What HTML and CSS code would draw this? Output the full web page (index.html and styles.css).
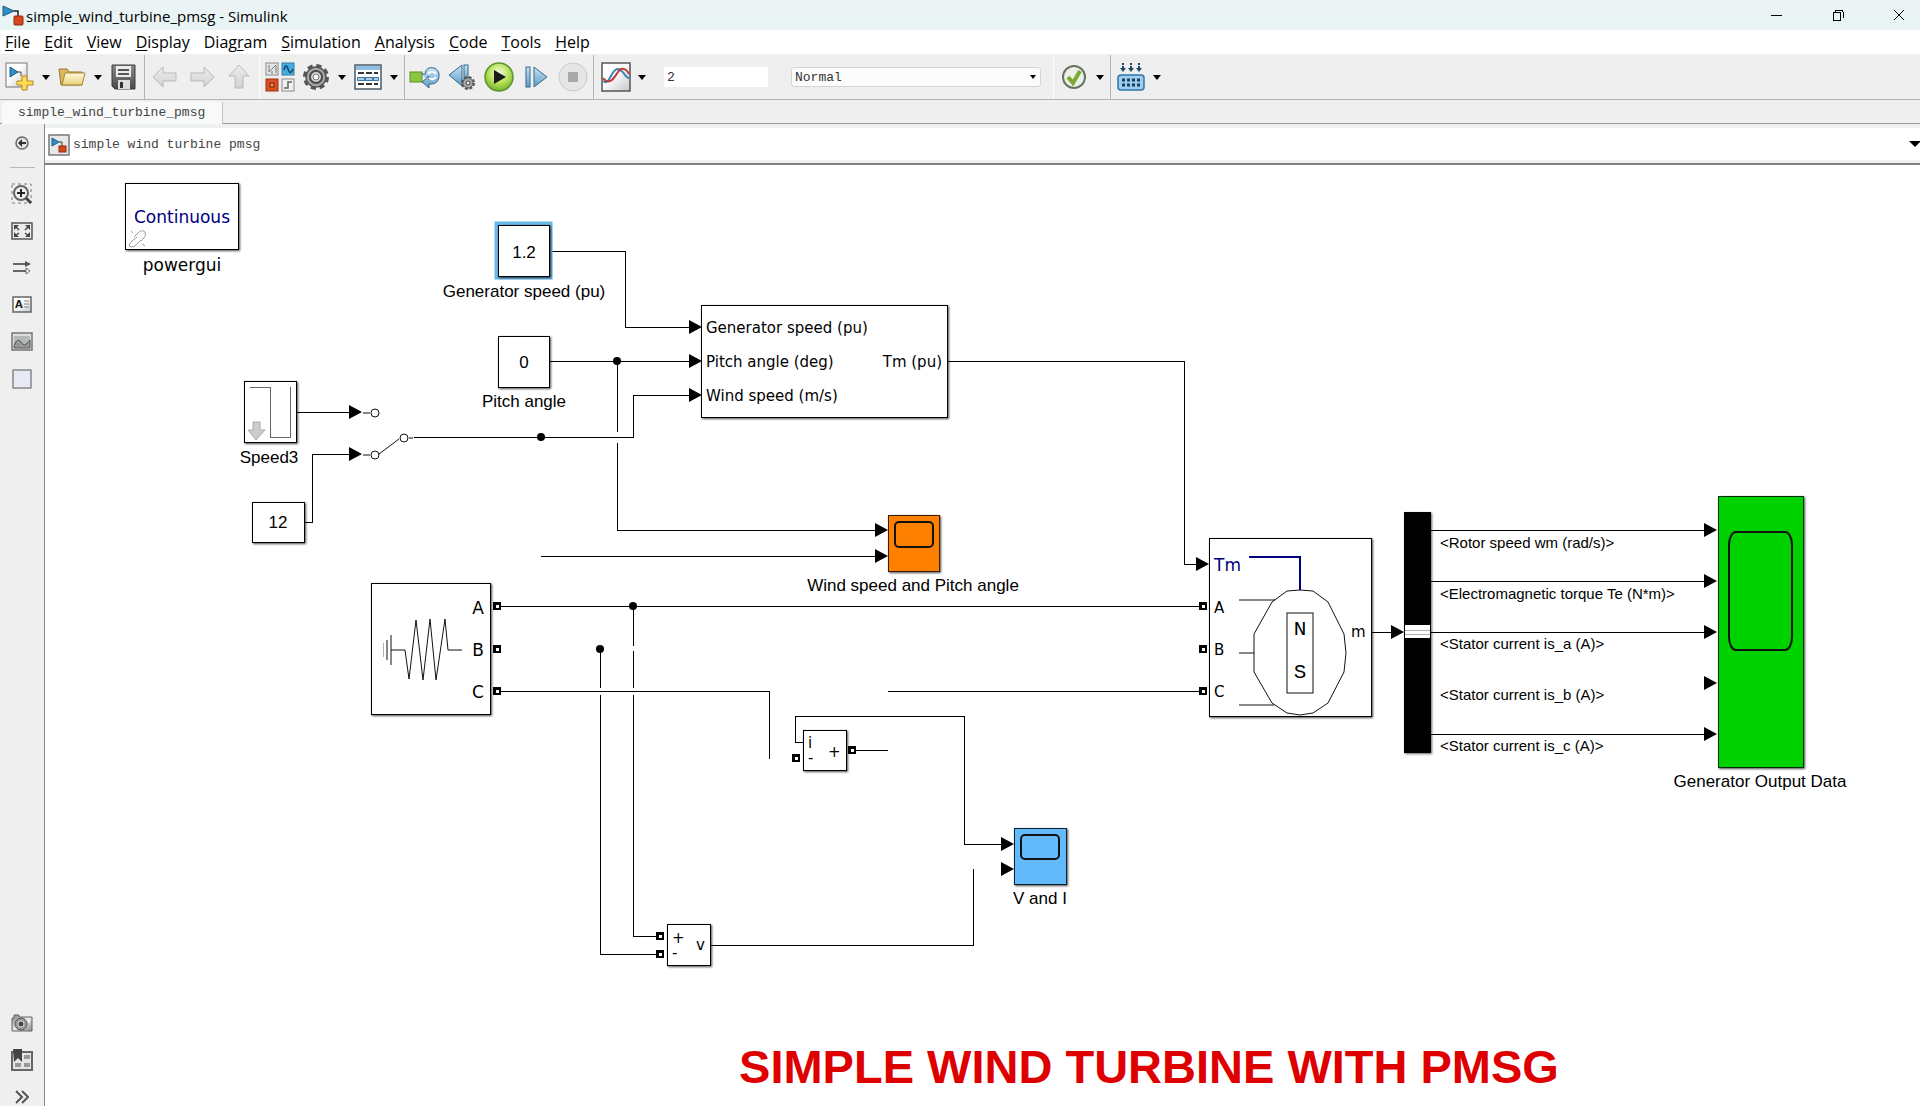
FILE: index.html
```html
<!DOCTYPE html>
<html lang="en">
<head>
<meta charset="utf-8">
<title>simple_wind_turbine_pmsg - Simulink</title>
<link rel="stylesheet" href="styles.css">
</head>
<body>
<svg class="defs" aria-hidden="true">
  <defs>
    <linearGradient id="paper" x1="0" y1="0" x2="1" y2="1"><stop offset="0.4" stop-color="#fff"/><stop offset="1" stop-color="#c4c8cc"/></linearGradient>
    <linearGradient id="folder" x1="0" y1="0" x2="0" y2="1"><stop offset="0" stop-color="#fffbe0"/><stop offset="1" stop-color="#e8cf77"/></linearGradient>
    <linearGradient id="pale" x1="0" y1="0" x2="0" y2="1"><stop offset="0" stop-color="#ededed"/><stop offset="1" stop-color="#d2d2d2"/></linearGradient>
    <linearGradient id="steel" x1="0" y1="0" x2="0" y2="1"><stop offset="0" stop-color="#c9e3f3"/><stop offset="1" stop-color="#5f9cc6"/></linearGradient>
    <linearGradient id="metal" x1="0" y1="0" x2="0" y2="1"><stop offset="0" stop-color="#8b8b8b"/><stop offset="1" stop-color="#4a4a4a"/></linearGradient>
    <linearGradient id="panel" x1="0" y1="0" x2="1" y2="1"><stop offset="0" stop-color="#777"/><stop offset="0.5" stop-color="#e8eaea"/><stop offset="1" stop-color="#888"/></linearGradient>
    <radialGradient id="go" cx="0.5" cy="0.35" r="0.65"><stop offset="0" stop-color="#f2fbdc"/><stop offset="0.55" stop-color="#b9e25c"/><stop offset="1" stop-color="#71b32a"/></radialGradient>
    <g id="model">
      <path d="M1 1L12 6L1 11Z" fill="#2f8fc4" stroke="#1d5f87"/>
      <path d="M12 6H16V11" fill="none" stroke="#222" stroke-width="1.5"/>
      <rect x="12" y="11" width="9" height="9" rx="1" fill="#d4481c" stroke="#8e2a0c"/>
    </g>
    <path id="caret" d="M0 0H8L4 5Z"/>
    <path id="arrow" d="M0 0L-13 -7V7Z"/>
    <g id="port"><rect x="-4" y="-4" width="8" height="8"/><rect x="-1" y="-1" width="3" height="3" fill="#fff"/></g>
  </defs>
</svg>

<header class="titlebar">
  <svg class="app-icon" width="22" height="22"><use href="#model" y="1"/></svg>
  <h1 class="title">simple_wind_turbine_pmsg - Simulink</h1>
  <div class="window-buttons">
    <button type="button" aria-label="Minimize"><svg width="12" height="12"><path d="M0 6H11" class="glyph"/></svg></button>
    <button type="button" aria-label="Restore"><svg width="12" height="12"><path d="M1 3H8V11H1ZM3 3V1H9Q11 1 11 3V9" class="glyph"/></svg></button>
    <button type="button" aria-label="Close"><svg width="12" height="12"><path d="M1 1L11 11M11 1L1 11" class="glyph smooth"/></svg></button>
  </div>
</header>

<nav class="menubar">
  <a href="#file"><u>F</u>ile</a><a href="#edit"><u>E</u>dit</a><a href="#view"><u>V</u>iew</a><a href="#display"><u>D</u>isplay</a><a href="#diagram">Diag<u>r</u>am</a><a href="#simulation"><u>S</u>imulation</a><a href="#analysis"><u>A</u>nalysis</a><a href="#code"><u>C</u>ode</a><a href="#tools"><u>T</u>ools</a><a href="#help"><u>H</u>elp</a>
</nav>

<div class="toolbar" role="toolbar" aria-label="Model toolbar">
  <div class="group">
    <button type="button" class="tool" aria-label="New model"><svg width="30" height="30"><rect x="1" y="1" width="21" height="24" fill="url(#paper)" stroke="#777"/><path d="M5 5L13 10L5 15Z" fill="#2f8fc4" stroke="#1d5f87"/><path d="M12 10H16V14" fill="none" stroke="#444"/><path d="M17 14H22V19H28V23H22V28H17V23H12V19H17Z" fill="#ffdf4d" stroke="#b8862a"/></svg></button>
    <button type="button" class="drop" aria-label="New options"><svg width="8" height="5"><use href="#caret"/></svg></button>
    <button type="button" class="tool" aria-label="Open"><svg width="28" height="20"><path d="M1 2H9L11 5H24V18H3Z" fill="#d9ba5c" stroke="#94762b"/><path d="M7 6H27L24 18H4Z" fill="url(#folder)" stroke="#a58738"/></svg></button>
    <button type="button" class="drop" aria-label="Open options"><svg width="8" height="5"><use href="#caret"/></svg></button>
    <button type="button" class="tool" aria-label="Save"><svg width="26" height="27"><path d="M1 1H24V25H4L1 22Z" fill="url(#metal)" stroke="#3a3a3a"/><rect x="5" y="2" width="15" height="11" fill="#ececec"/><path d="M7 6H18M7 10H18" stroke="#555" stroke-width="2"/><rect x="7" y="16" width="12" height="9" fill="#ddd"/><rect x="9" y="18" width="3" height="6" fill="#333"/></svg></button>
  </div>
  <div class="group spaced light">
    <button type="button" class="tool" aria-label="Back"><svg width="26" height="22"><path d="M1 11L11 1V7H24V15H11V21Z" fill="url(#pale)" stroke="#b9b9b9"/></svg></button>
    <button type="button" class="tool" aria-label="Forward"><svg width="26" height="22"><path d="M25 11L15 1V7H2V15H15V21Z" fill="url(#pale)" stroke="#b9b9b9"/></svg></button>
    <button type="button" class="tool" aria-label="Up to parent"><svg width="22" height="26"><path d="M11 1L21 12H15V24H7V12H1Z" fill="url(#pale)" stroke="#b9b9b9"/></svg></button>
  </div>
  <div class="group">
    <button type="button" class="tool" aria-label="Library browser"><svg width="30" height="30"><rect x="1" y="1" width="12" height="12" fill="#e6e6e6" stroke="#8a8a8a"/><path d="M4 3V10M4 10L11 3M7 9V12M11 4V11" fill="none" stroke="#777"/><rect x="17" y="1" width="12" height="12" fill="#48aee2" stroke="#2c7daa"/><path d="M19 8Q21 0 23 7T28 7" fill="none" stroke="#0d4567" stroke-width="1.5"/><rect x="1" y="17" width="12" height="12" fill="#d8501f" stroke="#9c3410"/><rect x="5" y="21" width="4" height="4" fill="#e98b66" stroke="#7a260b"/><rect x="17" y="17" width="12" height="12" fill="#f1f1f1" stroke="#8a8a8a"/><path d="M19 26H23V20H27" fill="none" stroke="#666" stroke-width="1.5"/></svg></button>
    <button type="button" class="tool" aria-label="Model configuration"><svg width="28" height="28"><circle cx="14" cy="14" r="11" fill="none" stroke="#555" stroke-width="4" stroke-dasharray="5 3.64"/><circle cx="14" cy="14" r="10" fill="#a5a5a5" stroke="#555" stroke-width="1.5"/><circle cx="14" cy="14" r="6" fill="#d8d8d8" stroke="#4a4a4a" stroke-width="2"/><circle cx="14" cy="14" r="3" fill="#f5f5f5" stroke="#777"/></svg></button>
    <button type="button" class="drop" aria-label="Configuration options"><svg width="8" height="5"><use href="#caret"/></svg></button>
    <button type="button" class="tool" aria-label="Model explorer"><svg width="28" height="26"><rect x="1" y="1" width="26" height="24" fill="#fff" stroke="#4d5a66" stroke-width="1.5"/><rect x="2" y="2" width="24" height="4" fill="#8fbfe0"/><rect x="3" y="13" width="22" height="4" fill="#3a78ad"/><path d="M4 9H10M12 9H18M20 9H24M4 20H10M12 20H18M20 20H24" stroke="#333" stroke-width="2"/><path d="M4 15H10M12 15H18M20 15H24" stroke="#d7ebf8" stroke-width="1.5"/></svg></button>
    <button type="button" class="drop" aria-label="Explorer options"><svg width="8" height="5"><use href="#caret"/></svg></button>
  </div>
  <div class="group spaced">
    <button type="button" class="tool" aria-label="Update diagram"><svg width="32" height="24"><rect x="1" y="7" width="12" height="10" fill="#8cc63f" stroke="#5b8f22"/><path d="M12 9H16Q17 1 25 3Q31 5 30 12Q29 19 22 19H20V23L13 17L20 11V15" fill="url(#steel)" stroke="#33698f"/><path d="M19 9Q23 4 27 9M27 12Q24 16 20 13" fill="none" stroke="#fff" stroke-width="2"/></svg></button>
    <button type="button" class="tool" aria-label="Step back"><svg width="28" height="28"><path d="M1 12L14 2V23Z" fill="url(#steel)" stroke="#33698f"/><rect x="16" y="2" width="4" height="18" fill="url(#steel)" stroke="#33698f"/><circle cx="20" cy="20" r="6" fill="none" stroke="#555" stroke-width="2" stroke-dasharray="3 1.7"/><circle cx="20" cy="20" r="5" fill="#aaa" stroke="#555"/><circle cx="20" cy="20" r="2" fill="#eee" stroke="#444"/></svg></button>
    <button type="button" class="tool" aria-label="Run"><svg width="32" height="32"><circle cx="16" cy="16" r="14" fill="url(#go)" stroke="#5f9430" stroke-width="1.5"/><path d="M11 9L23 16L11 23Z" fill="#1b1b1b"/></svg></button>
    <button type="button" class="tool" aria-label="Step forward"><svg width="24" height="24"><rect x="2" y="2" width="4" height="20" fill="url(#steel)" stroke="#33698f"/><path d="M10 2L23 12L10 22Z" fill="url(#steel)" stroke="#33698f"/></svg></button>
    <button type="button" class="tool" aria-label="Stop"><svg width="32" height="32"><circle cx="16" cy="16" r="14" fill="#e6e6e6" stroke="#c9c9c9"/><rect x="11" y="11" width="10" height="10" fill="#a9a9a9"/></svg></button>
  </div>
  <div class="group fields light">
    <button type="button" class="tool" aria-label="Simulation data"><svg width="30" height="30"><rect x="1" y="1" width="28" height="28" fill="url(#paper)" stroke="#555" stroke-width="1.5"/><path d="M2 19C9 25 10 6 17 7C23 8 24 16 28 16" fill="none" stroke="#3a86c0" stroke-width="2"/><path d="M2 16C9 25 14 14 17 10C20 5 25 6 28 12" fill="none" stroke="#c23b31" stroke-width="2"/></svg></button>
    <button type="button" class="drop" aria-label="Data options"><svg width="8" height="5"><use href="#caret"/></svg></button>
    <input class="stop-time" type="text" value="2" aria-label="Simulation stop time">
    <div class="mode">
      <select aria-label="Simulation mode"><option>Normal</option></select>
      <svg class="mode-caret" width="6" height="4"><path d="M0 0H6L3 4Z"/></svg>
    </div>
  </div>
  <div class="group">
    <button type="button" class="tool" aria-label="Model advisor"><svg width="28" height="28"><circle cx="14" cy="14" r="11" fill="#eef0ec" stroke="#68745e" stroke-width="2"/><path d="M8 14L13 20L20 8" fill="none" stroke="#7cab33" stroke-width="4"/></svg></button>
    <button type="button" class="drop" aria-label="Advisor options"><svg width="8" height="5"><use href="#caret"/></svg></button>
  </div>
  <div class="group last">
    <button type="button" class="tool" aria-label="Build"><svg width="28" height="28"><path d="M6 0V7M14 0V7M22 0V7" stroke="#1e4664" stroke-width="2" stroke-dasharray="2 1"/><path d="M3 5H9L6 9ZM11 5H17L14 9ZM19 5H25L22 9Z" fill="#1e4664"/><rect x="1" y="12" width="26" height="15" rx="3" fill="#9fcdef" stroke="#2d75aa" stroke-width="1.5"/><path d="M5 17H23M5 22H23" stroke="#17415f" stroke-width="3" stroke-dasharray="3 2"/></svg></button>
    <button type="button" class="drop" aria-label="Build options"><svg width="8" height="5"><use href="#caret"/></svg></button>
  </div>
</div>

<div class="tabs"><a class="tab" href="#model-tab">simple_wind_turbine_pmsg</a></div>

<div class="workspace">
  <aside class="palette">
    <div class="palette-set">
      <button type="button" aria-label="Hide browser"><svg width="16" height="16"><circle cx="8" cy="8" r="6" fill="#e4e4e4" stroke="#6a6a6a" stroke-width="1.5"/><path d="M4 8L8 4V7H12V9H8V12Z" fill="#333"/></svg></button>
      <hr>
      <button type="button" aria-label="Zoom"><svg width="22" height="22"><rect x="1" y="1" width="19" height="19" fill="none" stroke="#777" stroke-dasharray="3 3"/><circle cx="10" cy="10" r="7" fill="#eee" stroke="#666" stroke-width="2"/><path d="M6 10H14M10 6V14" stroke="#222" stroke-width="2"/><path d="M15 15L20 20" stroke="#444" stroke-width="3"/></svg></button>
      <button type="button" aria-label="Fit to view"><svg width="22" height="18"><rect x="1" y="1" width="20" height="16" fill="#e9eceb" stroke="#555" stroke-width="1.5"/><path d="M3 3H8L3 8ZM19 3H14L19 8ZM3 15H8L3 10ZM19 15H14L19 10Z" fill="#444"/><path d="M4 4L8 8M18 4L14 8M4 14L8 11M18 14L14 11" stroke="#444" stroke-width="1.5"/></svg></button>
      <button type="button" aria-label="Sample times"><svg width="20" height="16"><path d="M1 4H15M1 11H15" stroke="#666" stroke-width="2"/><path d="M13 1L19 4L13 7Z" fill="#555"/><path d="M14 8L18 11L14 14Z" fill="#fff" stroke="#666"/></svg></button>
      <button type="button" aria-label="Annotation"><svg width="20" height="18"><rect x="1" y="1" width="18" height="15" fill="url(#paper)" stroke="#666" stroke-width="1.5"/><path d="M12 5H17M12 8H17M12 11H17" stroke="#888"/><text x="3" y="12" class="a-icon">A</text></svg></button>
      <button type="button" aria-label="Image"><svg width="22" height="20"><rect x="1" y="1" width="20" height="17" fill="#ddd" stroke="#777" stroke-width="1.5"/><rect x="3" y="4" width="16" height="12" fill="#b4b8b8"/><path d="M3 14Q6 5 10 10T15 12Q17 11 19 8V16H3Z" fill="#999" stroke="#555"/></svg></button>
      <button type="button" aria-label="Area"><svg width="20" height="20"><rect x="1" y="1" width="18" height="18" fill="#e7eaf4" stroke="#888" stroke-width="1.5"/></svg></button>
    </div>
    <div class="palette-set">
      <button type="button" aria-label="Screenshot"><svg width="22" height="18"><path d="M1 4H3V1H8V3H21V17H1Z" fill="url(#panel)" stroke="#666"/><circle cx="10" cy="10" r="6" fill="#999" stroke="#555"/><circle cx="10" cy="10" r="3" fill="#444" stroke="#ddd"/><rect x="17" y="5" width="2" height="4" fill="#eee"/></svg></button>
      <button type="button" aria-label="Viewmarks"><svg width="22" height="22"><rect x="1" y="3" width="20" height="18" fill="#e6e6e6" stroke="#666" stroke-width="2"/><path d="M13 6H19V10H13ZM13 14H19V18H13ZM4 14H10V18H4Z" fill="#999"/><path d="M2 0H11V13L7 9L3 13Z" fill="#444"/></svg></button>
      <button type="button" aria-label="Expand palette"><svg width="14" height="14"><path d="M1 1L7 7L1 13M7 1L13 7L7 13" fill="none" stroke="#555" stroke-width="2"/></svg></button>
    </div>
  </aside>

  <main class="editor">
    <div class="explorer-bar">
      <a class="crumb" href="#root"><svg width="22" height="22"><rect x="1" y="1" width="20" height="20" fill="#e8e8e8" stroke="#777" stroke-width="1.5"/><path d="M4 4L11 8L4 12Z" fill="#2f8fc4" stroke="#1d5f87"/><path d="M11 8H14V12" fill="none" stroke="#333"/><rect x="11" y="12" width="7" height="6" fill="#d4481c" stroke="#8e2a0c"/></svg>simple wind turbine pmsg</a>
      <button type="button" class="crumb-drop" aria-label="History"><svg width="12" height="7"><path d="M0 0H12L6 6Z"/></svg></button>
    </div>

    <svg class="canvas" role="img" aria-label="Block diagram">
      <g transform="translate(-46 -165)">
        <!-- signal lines -->
        <g class="wire">
          <path d="M550 251H625V327H690M550 361H690M414 437H633V395H690"/>
          <path d="M617 361V432M617 443V530H876"/>
          <path d="M541 556H876M948 361H1184V564H1198"/>
          <path d="M296 412H351M304 522H312V454H351"/>
          <path d="M500 606H1199M500 691H769V759M888 691H1199"/>
          <path d="M633 606V646M633 651V688M633 695V936H658M600 649V688M600 695V954H658"/>
          <path d="M711 945H973V869M803 742H795V716H964V844H1003M856 750H888"/>
          <path d="M1372 632H1393M1431 530H1706M1431 581H1706M1431 632H1706M1431 734H1706"/>
        </g>
        <g class="solid">
          <circle cx="617" cy="361" r="4"/><circle cx="541" cy="437" r="4"/><circle cx="633" cy="606" r="4"/><circle cx="600" cy="649" r="4"/>
          <use href="#arrow" x="702" y="327"/><use href="#arrow" x="702" y="361"/><use href="#arrow" x="702" y="395"/>
          <use href="#arrow" x="362" y="412"/><use href="#arrow" x="362" y="454"/>
          <use href="#arrow" x="888" y="530"/><use href="#arrow" x="888" y="556"/>
          <use href="#arrow" x="1014" y="844"/><use href="#arrow" x="1014" y="869"/>
          <use href="#arrow" x="1209" y="564"/><use href="#arrow" x="1404" y="632"/>
          <use href="#arrow" x="1717" y="530"/><use href="#arrow" x="1717" y="581"/><use href="#arrow" x="1717" y="632"/><use href="#arrow" x="1717" y="683"/><use href="#arrow" x="1717" y="734"/>
        </g>

        <!-- powergui -->
        <rect class="block" x="125" y="183" width="113" height="66"/>
        <text class="mask blue" x="182" y="223">Continuous</text>
        <g class="link"><path d="M134 237L138 233Q141 229 145 232Q147 235 143 239L141 241M137 237L132 241Q127 246 131 247Q134 248 138 243L141 240M131 231L133 233M142 244L145 246"/></g>
        <text class="mask" x="182" y="271">powergui</text>

        <!-- constants -->
        <rect class="selected" x="496" y="223" width="55" height="55"/>
        <rect class="block" x="498" y="225" width="51" height="51"/>
        <text class="label" x="524" y="258">1.2</text>
        <text class="label" x="524" y="297">Generator speed (pu)</text>
        <rect class="block" x="498" y="336" width="51" height="51"/>
        <text class="label" x="524" y="368">0</text>
        <text class="label" x="524" y="407">Pitch angle</text>
        <rect class="block" x="252" y="502" width="52" height="40"/>
        <text class="label" x="278" y="528">12</text>

        <!-- wind speed step -->
        <rect class="block" x="244" y="381" width="52" height="61"/>
        <path class="wire gray" d="M250 387H270V437H290V387"/>
        <path d="M253 422H260V430H265L256 440L248 430H253Z" fill="#ccc" stroke="#aaa"/>
        <text class="label" x="269" y="463">Speed3</text>

        <!-- manual switch -->
        <g class="switch"><path d="M363 413H370M363 455H370M379 454L399 439M409 438H413"/><circle cx="375" cy="413" r="4"/><circle cx="375" cy="455" r="4"/><circle cx="404" cy="438" r="4"/></g>

        <!-- wind turbine -->
        <rect class="block" x="701" y="305" width="246" height="112"/>
        <text class="pin" x="706" y="333">Generator speed (pu)</text>
        <text class="pin" x="706" y="367">Pitch angle (deg)</text>
        <text class="pin" x="706" y="401">Wind speed (m/s)</text>
        <text class="pin end" x="942" y="367">Tm (pu)</text>

        <!-- scopes -->
        <rect class="block orange" x="888" y="515" width="51" height="56"/>
        <rect class="screen" x="895" y="522" width="38" height="25" rx="4"/>
        <text class="label" x="913" y="591">Wind speed and Pitch angle</text>
        <rect class="block azure" x="1014" y="828" width="52" height="56"/>
        <rect class="screen" x="1021" y="835" width="38" height="24" rx="4"/>
        <text class="label" x="1040" y="904">V and I</text>
        <rect class="block green" x="1718" y="496" width="85" height="271"/>
        <rect class="screen" x="1729" y="532" width="63" height="118" rx="7" ry="13"/>
        <text class="label" x="1760" y="787">Generator Output Data</text>

        <!-- three-phase source -->
        <rect class="block" x="371" y="583" width="119" height="131"/>
        <path class="wire faint" d="M383 643V657"/>
        <path class="sketch" d="M387 640V660M391 635V665M391 650H405L409 679L416 620L423 680L430 619L436 680L445 619L448 650H462"/>
        <text class="mask" x="478" y="614">A</text><text class="mask" x="478" y="656">B</text><text class="mask" x="478" y="698">C</text>
        <g class="ports"><use href="#port" x="497" y="606"/><use href="#port" x="497" y="649"/><use href="#port" x="497" y="691"/></g>

        <!-- current and voltage measurement -->
        <rect class="block" x="803" y="730" width="43" height="40"/>
        <text class="pin" x="808" y="748">i</text><text class="pin" x="808" y="763">-</text><text class="pin" x="828" y="757">+</text>
        <rect class="block" x="667" y="924" width="43" height="41"/>
        <text class="pin" x="672" y="943">+</text><text class="pin" x="672" y="958">-</text><text class="pin" x="696" y="950">v</text>
        <g class="ports"><use href="#port" x="796" y="758"/><use href="#port" x="852" y="750"/><use href="#port" x="660" y="936"/><use href="#port" x="660" y="954"/></g>

        <!-- synchronous machine -->
        <rect class="block" x="1209" y="538" width="162" height="178"/>
        <path class="shaft" d="M1249 557H1300V590"/>
        <text class="mask start blue" x="1214" y="571">Tm</text>
        <text class="pin" x="1214" y="613">A</text><text class="pin" x="1214" y="655">B</text><text class="pin" x="1214" y="697">C</text><text class="pin" x="1351" y="637">m</text>
        <path class="sketch" d="M1239 600H1275M1239 653H1254M1239 705H1274M1287 591L1300 590L1313 591L1328 602L1344 634L1346 653L1344 672L1328 703L1313 713L1300 715L1287 713L1272 703L1254 672V634L1272 602Z"/>
        <rect class="magnet" x="1287" y="613" width="26" height="80"/>
        <text class="pole" x="1300" y="635">N</text><text class="pole" x="1300" y="678">S</text>
        <g class="ports"><use href="#port" x="1203" y="606"/><use href="#port" x="1203" y="649"/><use href="#port" x="1203" y="691"/></g>

        <!-- bus selector -->
        <rect class="bus" x="1404" y="512" width="27" height="241"/>
        <rect x="1405" y="625" width="25" height="13" fill="#fff"/>
        <path class="wire faint" d="M1405 630H1430M1405 634H1430"/>
        <text class="signal" x="1440" y="548">&lt;Rotor speed wm (rad/s)&gt;</text>
        <text class="signal" x="1440" y="599">&lt;Electromagnetic torque Te (N*m)&gt;</text>
        <text class="signal" x="1440" y="649">&lt;Stator current is_a (A)&gt;</text>
        <text class="signal" x="1440" y="700">&lt;Stator current is_b (A)&gt;</text>
        <text class="signal" x="1440" y="751">&lt;Stator current is_c (A)&gt;</text>

        <text class="heading" x="1149" y="1083">SIMPLE WIND TURBINE WITH PMSG</text>
      </g>
    </svg>
  </main>
</div>
</body>
</html>
```
FILE: styles.css
```css
* { box-sizing: border-box; }

body {
  margin: 0;
  height: 100vh;
  display: flex;
  flex-direction: column;
  background: #efefef;
  color: #000;
  font-family: "Open Sans", "Noto Sans", sans-serif;
  font-size: 16px;
}

button {
  display: flex;
  align-items: center;
  justify-content: center;
  padding: 0;
  border: 0;
  background: none;
}

button svg { flex: none; display: block; }
a { color: inherit; text-decoration: none; }
.defs { position: absolute; width: 0; height: 0; }

/* Title bar */
.titlebar {
  flex: none;
  display: flex;
  align-items: center;
  height: 30px;
  padding-left: 2px;
  background: linear-gradient(#ecf3f6, #e8f5f4);
}
.title { margin: 0 0 0 2px; padding-top: 2px; font-size: 15px; line-height: 20px; font-weight: 400; }
.window-buttons { display: flex; gap: 18px; margin-left: auto; }
.window-buttons button { width: 43px; height: 30px; }
.glyph { fill: none; stroke: #000; shape-rendering: crispEdges; }
.smooth { shape-rendering: auto; }

/* Menu bar */
.menubar {
  flex: none;
  display: flex;
  gap: 14px;
  height: 25px;
  padding-left: 5px;
  background: #fff;
  border-bottom: 1px solid #f0f0f0;
  line-height: 24px;
}
.menubar u { text-underline-offset: 2px; text-decoration-thickness: 1px; }

/* Toolbar */
.toolbar {
  flex: none;
  display: flex;
  height: 45px;
  border-bottom: 1px solid #b2b4b3;
}
.group {
  display: flex;
  align-items: center;
  padding: 0 2px;
  border-right: 1px solid #b5b5b5;
}
.spaced { gap: 1px; }
.light { border-right-color: #fff; }
.last { border-right: 0; }
.tool { width: 36px; height: 40px; }
.drop { width: 16px; height: 40px; }
.fields { padding: 0 12px 0 4px; }
.stop-time, .mode select {
  height: 20px;
  padding: 0 3px;
  border: 0;
  background: #fff;
  font-family: "Liberation Mono", monospace;
  font-size: 13px;
  color: #333;
}
.stop-time { width: 104px; margin-left: 14px; }
.mode { position: relative; width: 250px; margin-left: 23px; display: flex; }
.mode select {
  width: 100%;
  appearance: none;
  border: 1px solid #d4d4d4;
  border-radius: 3px;
  background: #fcfcfc;
}
.mode-caret { position: absolute; right: 5px; top: 8px; }

/* Document tabs */
.tabs {
  flex: none;
  height: 24px;
  padding: 2px 0 0 2px;
  border-bottom: 1px solid #959b98;
}
.tab {
  display: block;
  width: 221px;
  height: 22px;
  padding-left: 16px;
  background: #f8f9f9;
  border-right: 1px solid #c4c4c4;
  font-family: "Liberation Mono", monospace;
  font-size: 13px;
  line-height: 22px;
  color: #444;
}

/* Workspace */
.workspace { flex: 1; display: flex; min-height: 0; }
.palette {
  flex: none;
  display: flex;
  flex-direction: column;
  justify-content: space-between;
  width: 44px;
  padding-top: 10px;
}
.palette-set { display: flex; flex-direction: column; gap: 19px; }
.palette button { width: 44px; height: 18px; }
.palette hr {
  width: 25px;
  height: 1px;
  margin: -4px auto -2px 10px;
  border: 0;
  background: #b8b8b8;
}
.a-icon { font: bold 10px "DejaVu Sans", sans-serif; fill: #222; }

.editor {
  flex: 1;
  display: flex;
  flex-direction: column;
  min-width: 0;
  border-left: 1px solid #868989;
  background: #fff;
}
.explorer-bar {
  flex: none;
  display: flex;
  align-items: center;
  justify-content: space-between;
  height: 41px;
  padding: 0 0 2px 3px;
  border-top: 4px solid #eff1f0;
  border-bottom: 2px solid #808282;
  box-shadow: inset 0 -3px #eff1f0;
}
.crumb {
  display: flex;
  align-items: center;
  gap: 3px;
  height: 32px;
  font-family: "Liberation Mono", monospace;
  font-size: 13px;
  color: #444;
}
.crumb-drop { width: 11px; height: 32px; overflow: hidden; justify-content: flex-start; }

/* Block diagram */
.canvas { flex: 1; display: block; width: 100%; min-height: 0; padding-left: 1px; }
.wire { fill: none; stroke: #000; stroke-width: 1; shape-rendering: crispEdges; }
.gray { stroke: #666; }
.faint { stroke: #b0b0b0; }
.block {
  fill: #fff;
  stroke: #000;
  stroke-width: 1;
  shape-rendering: crispEdges;
  filter: drop-shadow(1px 1px 1px rgba(0, 0, 0, .7));
}
.selected { fill: #69b7e6; stroke: #69b7e6; stroke-width: 3; }
.orange { fill: #fd8000; stroke: #3a1c00; }
.azure { fill: #62bafb; stroke: #0a2230; }
.green { fill: #00d200; stroke: #032e03; }
.screen { fill: none; stroke: #111; stroke-width: 2; }
.sketch, .switch, .magnet { fill: none; stroke: #111; stroke-width: 1; }
.link { fill: none; stroke: #999; stroke-width: 1; }
.shaft { fill: none; stroke: #00007e; stroke-width: 2; }
.bus { filter: drop-shadow(1px 1px 1px rgba(0, 0, 0, .6)); }
.label { font: 17px "Liberation Sans", sans-serif; text-anchor: middle; }
.signal { font: 15px "Liberation Sans", sans-serif; }
.mask { font: 17px "DejaVu Sans", sans-serif; text-anchor: middle; }
.pin { font: 15px "DejaVu Sans", sans-serif; }
.end { text-anchor: end; }
.start { text-anchor: start; }
.pole { font: 21px "Liberation Mono", monospace; text-anchor: middle; }
.blue { fill: #00007e; }
.heading { font: bold 47px "Liberation Sans", sans-serif; text-anchor: middle; fill: #de0000; }
```
